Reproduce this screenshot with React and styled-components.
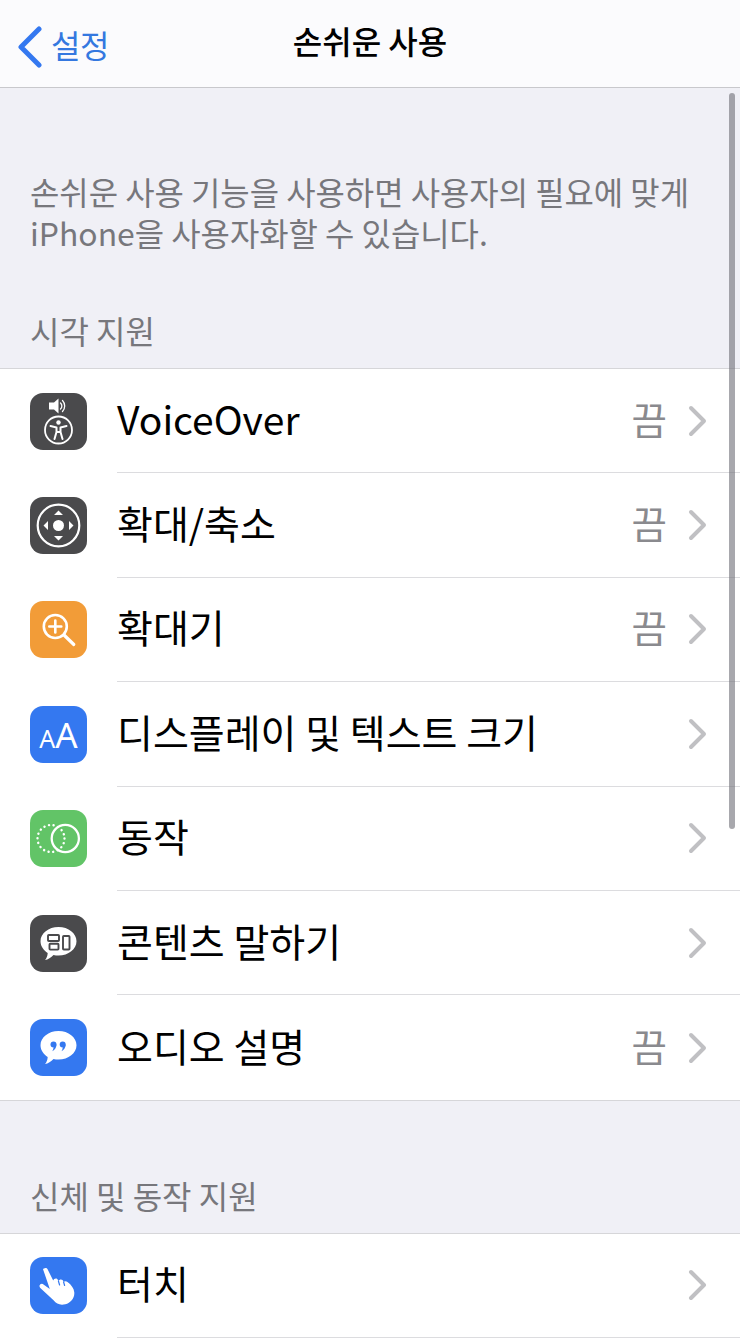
import React from 'react';
import styled, { createGlobalStyle } from 'styled-components';

const GlobalStyle = createGlobalStyle`
  html, body {
    margin: 0;
    padding: 0;
    background: #f0f0f6;
    font-family: "Noto Sans CJK KR", "Noto Sans", sans-serif;
  }
`;

const Page = styled.div`
  position: relative;
  width: 740px;
  height: 1338px;
  overflow: hidden;
  background: #f0f0f6;
`;

const NavBar = styled.header`
  position: relative;
  display: flex;
  align-items: center;
  justify-content: center;
  height: 87px;
  background: #fbfbfd;
  border-bottom: 1px solid #c8c8cc;
`;

const BackLink = styled.a`
  position: absolute;
  left: 18px;
  top: 22px;
  display: flex;
  align-items: center;
  gap: 9px;
  color: #3478e0;
  font-size: 32px;
  line-height: 44px;
  letter-spacing: -0.5px;
`;

const BackText = styled.span`
  padding-bottom: 6px;
`;

const NavTitle = styled.h1`
  margin: 0;
  padding-bottom: 7px;
  font-size: 32px;
  font-weight: 500;
  color: #000;
`;

const Intro = styled.p`
  margin: 0;
  padding: 83px 30px 0;
  font-size: 31.9px;
  line-height: 41px;
  color: #77777c;
`;

const SectionLabel = styled.h2`
  margin: 0;
  padding: ${(p) => p.$top}px 30px 16px;
  font-size: 32px;
  font-weight: 400;
  line-height: 44px;
  color: #77777c;
`;

const Group = styled.ul`
  margin: 0;
  padding: 0;
  list-style: none;
  background: #fff;
  border-top: 1px solid #d6d6d9;
  border-bottom: 1px solid #d6d6d9;
`;

const Row = styled.li`
  display: flex;
  align-items: center;
  height: 104.4px;
  padding-left: 30px;
`;

const IconTile = styled.div`
  flex: none;
  width: 57px;
  height: 57px;
  border-radius: 13px;
  background: ${(p) => p.$color};
  display: flex;
  align-items: center;
  justify-content: center;
  svg {
    display: block;
  }
`;

const TileLetters = styled.div`
  display: flex;
  align-items: baseline;
  color: #fff;
  font-family: "Noto Sans", sans-serif;
  font-size: 35px;
  line-height: 1;
`;

const SmallLetter = styled.span`
  font-size: 25px;
`;

const RowBody = styled.div`
  flex: 1;
  height: 100%;
  margin-left: 30px;
  padding-right: 33px;
  display: flex;
  align-items: center;
  border-bottom: ${(p) => (p.$last ? 'none' : '1px solid #dcdcdf')};
  box-sizing: border-box;
`;

const RowLabel = styled.span`
  flex: 1;
  padding-bottom: 6px;
  font-size: 39px;
  color: #000;
  line-height: 50px;
`;

const RowValue = styled.span`
  padding-bottom: 6px;
  font-size: 38.5px;
  line-height: 50px;
  color: #8a8a8e;
  margin-right: 21px;
`;

const ScrollThumb = styled.div`
  position: absolute;
  left: 729px;
  top: 93px;
  width: 6px;
  height: 736px;
  border-radius: 3px;
  background: rgba(110, 110, 118, 0.6);
`;

const Chevron = () => (
  <svg width="19" height="32" viewBox="0 0 19 32" fill="none">
    <path d="M3 3l13 13L3 29" stroke="#c0c0c3" strokeWidth="4" strokeLinecap="round" strokeLinejoin="round" />
  </svg>
);

const BackChevron = () => (
  <svg width="24" height="42" viewBox="0 0 24 42" fill="none">
    <path d="M21 3L3 21l18 18" stroke="#3478f0" strokeWidth="5" strokeLinecap="round" strokeLinejoin="round" />
  </svg>
);

const VoiceOverIcon = () => (
  <svg width="57" height="57" viewBox="0 0 57 57" fill="none">
    <path d="M19 9.500h5l4.500-4v15l-4.500-4h-5z" fill="#fff" />
    <path d="M30.500 10a4 4 0 0 1 0 6M32.500 7.500a8 8 0 0 1 0 11" stroke="#fff" strokeWidth="1.300" strokeLinecap="round" />
    <circle cx="28.500" cy="37" r="13.500" stroke="#fff" strokeWidth="1.800" />
    <circle cx="28.500" cy="29.500" r="2.200" fill="#fff" />
    <path d="M20.500 33l6 1.500v4.500L24.500 46M36.500 33l-6 1.500v4.500l2 7M26.500 39h4" stroke="#fff" strokeWidth="2" strokeLinecap="round" strokeLinejoin="round" />
  </svg>
);

const ZoomIcon = () => (
  <svg width="57" height="57" viewBox="0 0 57 57" fill="none">
    <circle cx="28.500" cy="28.500" r="20.800" stroke="#fff" strokeWidth="2.200" />
    <circle cx="28.500" cy="28.500" r="5.500" fill="#fff" />
    <path d="M28.500 13.500l4.500 4.500h-9zM28.500 43.500L33 39h-9zM13.500 28.500L18 24v9zM43.500 28.500L39 24v9z" fill="#fff" />
  </svg>
);

const MagnifierIcon = () => (
  <svg width="57" height="57" viewBox="0 0 57 57" fill="none">
    <circle cx="25.300" cy="25.500" r="11.500" stroke="#fff" strokeWidth="2.600" />
    <path d="M25.300 19.500v12M19.300 25.500h12" stroke="#fff" strokeWidth="2.600" strokeLinecap="round" />
    <path d="M34 34l9.800 9.500" stroke="#fff" strokeWidth="3.200" strokeLinecap="round" />
  </svg>
);

const TextSizeIcon = () => (
  <TileLetters>
    <SmallLetter>A</SmallLetter>A
  </TileLetters>
);

const MotionIcon = () => (
  <svg width="57" height="57" viewBox="0 0 57 57" fill="none">
    <circle cx="21" cy="28.500" r="13.500" stroke="#fff" strokeWidth="2.400" strokeLinecap="round" strokeDasharray="0.1 4.600" />
    <circle cx="35.300" cy="28.500" r="13.600" stroke="#fff" strokeWidth="2.300" />
  </svg>
);

const Bubble = ({ children }) => (
  <svg width="57" height="57" viewBox="0 0 57 57" fill="none">
    <path d="M28.500 12c10 0 18 6.300 18 14.200S38.500 40.500 28.500 40.500c-1.800 0-3.400-.2-5-.6-2.300 2.600-5.500 4.600-8.500 5 1.500-1.600 2.500-4 2.700-7C13.800 35.500 10.500 31.300 10.500 26.200 10.500 18.300 18.500 12 28.500 12z" fill="#fff" />
    {children}
  </svg>
);

const SpokenContentIcon = () => (
  <Bubble>
    <rect x="18" y="20" width="11" height="6" rx="0.800" stroke="#4a4a4c" strokeWidth="1.900" />
    <rect x="19.500" y="28.800" width="9" height="5.800" rx="0.800" stroke="#4a4a4c" strokeWidth="1.900" />
    <rect x="33" y="21" width="6.500" height="13.500" rx="0.800" stroke="#4a4a4c" strokeWidth="1.900" />
  </Bubble>
);

const AudioDescriptionIcon = () => (
  <Bubble>
    <circle cx="23.500" cy="25.500" r="3" fill="#3478f0" />
    <path d="M26.300 25.500c.2 3-1.300 5.500-4 6.800.8-1.400 1.200-2.500 1.200-3.800z" fill="#3478f0" />
    <circle cx="32.700" cy="25.500" r="3" fill="#3478f0" />
    <path d="M35.500 25.500c.2 3-1.300 5.500-4 6.800.8-1.400 1.200-2.500 1.200-3.800z" fill="#3478f0" />
  </Bubble>
);

const TouchIcon = () => (
  <svg width="57" height="57" viewBox="0 0 57 57" fill="none">
    <path
      d="M14 11.500c1.300-1 3-.5 3.600.8l5.600 11.200c.6-1.700 2.600-2.600 4-1.500.7.5 1 1.300 1.200 2 .9-1.500 2.800-2 4.100-1 .7.5 1 1.200 1.100 2 1-1 2.700-1 3.900 0 4 3 6.500 6.500 6.800 10.500.4 5.500-3.600 10.500-9 11.800-5 1.200-9-.3-11.500-3.700l-13.500-12.700c-1-1-1.100-2.400-.2-3.300.9-.9 2.300-1 3.400-.2l6.300 4.500-6.700-19.500c-.1-.4.3-.8.900-.9z"
      fill="#fff"
    />
    <path d="M28.400 24l1.200 4M33.600 25l1 3.500" stroke="#3478f0" strokeWidth="1.200" strokeLinecap="round" />
  </svg>
);

const visionRows = [
  { label: 'VoiceOver', value: '끔', color: '#4a4a4c', Icon: VoiceOverIcon },
  { label: '확대/축소', value: '끔', color: '#4a4a4c', Icon: ZoomIcon },
  { label: '확대기', value: '끔', color: '#f29c38', Icon: MagnifierIcon },
  { label: '디스플레이 및 텍스트 크기', color: '#3478f0', Icon: TextSizeIcon },
  { label: '동작', color: '#62c467', Icon: MotionIcon },
  { label: '콘텐츠 말하기', color: '#4a4a4c', Icon: SpokenContentIcon },
  { label: '오디오 설명', value: '끔', color: '#3478f0', Icon: AudioDescriptionIcon },
];

const SettingsRow = ({ label, value, color, Icon, last }) => (
  <Row>
    <IconTile $color={color}>
      <Icon />
    </IconTile>
    <RowBody $last={last}>
      <RowLabel>{label}</RowLabel>
      {value && <RowValue>{value}</RowValue>}
      <Chevron />
    </RowBody>
  </Row>
);

export default function App() {
  return (
    <Page>
      <GlobalStyle />
      <NavBar>
        <BackLink>
          <BackChevron />
          <BackText>설정</BackText>
        </BackLink>
        <NavTitle>손쉬운 사용</NavTitle>
      </NavBar>
      <Intro>
        손쉬운 사용 기능을 사용하면 사용자의 필요에 맞게
        <br />
        iPhone을 사용자화할 수 있습니다.
      </Intro>
      <SectionLabel $top={55}>시각 지원</SectionLabel>
      <Group>
        {visionRows.map((row, i) => (
          <SettingsRow key={row.label} {...row} last={i === visionRows.length - 1} />
        ))}
      </Group>
      <SectionLabel $top={72}>신체 및 동작 지원</SectionLabel>
      <Group>
        <SettingsRow label="터치" color="#3478f0" Icon={TouchIcon} />
      </Group>
      <ScrollThumb />
    </Page>
  );
}
